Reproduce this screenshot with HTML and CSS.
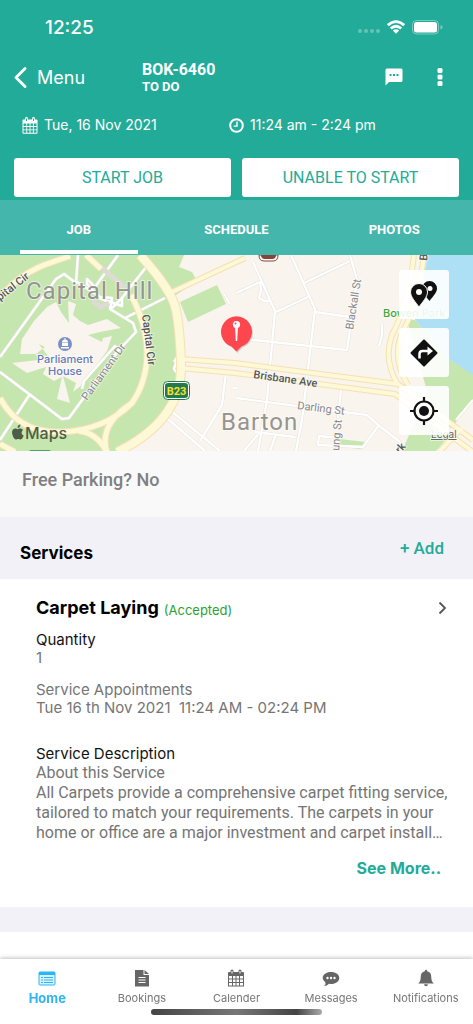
FILE: index.html
```html
<!DOCTYPE html>
<html lang="en">
<head>
  <meta charset="UTF-8" />
  <title>BOK-6460</title>
  <meta name="viewport" content="width=device-width, initial-scale=1.0" />
  <link rel="stylesheet" href="styles.css">
</head>
<body>

<header class="top">
  <div class="status">
    <span class="clock">12:25</span>
    <div class="status-icons">
      <svg width="22" height="18" viewBox="0 0 22 18" fill="#fff" opacity=".3"><circle cx="2" cy="13" r="2"/><circle cx="8" cy="13" r="2"/><circle cx="14" cy="13" r="2"/><circle cx="20" cy="13" r="2"/></svg>
      <svg width="18" height="14" viewBox="0 0 18 14" fill="none" stroke="#fff" stroke-width="2.8"><path d="M.8 5.2Q9-2 17.2 5.2M3.800 8.500Q9 4 14.200 8.500"/><path d="M5.800 10.600Q9 8 12.200 10.600L9 13.800z" fill="#fff" stroke="none"/></svg>
      <svg width="31" height="15" viewBox="0 0 31 15"><rect x=".5" y=".5" width="26" height="13.5" rx="4" fill="none" stroke="#fff" opacity=".4"/><rect x="2" y="2" width="23" height="10.5" rx="2.5" fill="#fff"/><path d="M28.5 5q2 .5 2 2.300T28.500 9.600z" fill="#fff" opacity=".4"/></svg>
    </div>
  </div>

  <div class="navbar">
    <a href="#" class="back">
      <svg width="13" height="21" viewBox="0 0 13 21" fill="none" stroke="#fff" stroke-width="2.800" stroke-linecap="round" stroke-linejoin="round"><path d="M11 1.600L2 10.500l9 8.900"/></svg>
      Menu
    </a>
    <div class="job-id">
      <h1>BOK-6460</h1>
      <p>TO DO</p>
    </div>
    <button class="icon-btn" aria-label="Chat">
      <svg width="18" height="18" viewBox="0 0 18 18"><path d="M2 .500h14q1.500 0 1.500 1.500v10.500q0 1.500-1.500 1.500H4l-3.500 3.500V2Q.500.500 2 .500z" fill="#fff"/><path d="M4.500 6h2v2h-2zM8 6h2v2H8zM11.500 6h2v2h-2z" fill="#22ab98"/></svg>
    </button>
    <button class="icon-btn more" aria-label="More">
      <svg width="6" height="18" viewBox="0 0 6 18" fill="#fff"><rect x=".500" width="5" height="5" rx="1.500"/><rect x=".500" y="6.500" width="5" height="5" rx="1.500"/><rect x=".500" y="13" width="5" height="5" rx="1.500"/></svg>
    </button>
  </div>

  <div class="when">
    <span class="date">
      <svg width="16" height="17" viewBox="0 0 16 17"><path d="M1.500 2.500h13q1 0 1 1V16q0 .800-1 .800h-13Q.500 16.800.500 16V3.500q0-1 1-1z" fill="#fff"/><path d="M1.500 6.500h2.800v2.500H1.500zM5.200 6.500H7.600v2.500H5.200zM8.500 6.500h2.400v2.500H8.500zM11.800 6.500h2.700v2.500h-2.700zM1.500 9.900h2.800v2.500H1.500zM5.200 9.900H7.600v2.500H5.200zM8.500 9.900h2.400v2.500H8.500zM11.800 9.900h2.700v2.500h-2.700zM1.500 13.300h2.800v2.500H1.500zM5.200 13.300H7.600v2.500H5.200zM8.500 13.300h2.400v2.500H8.500zM11.800 13.300h2.700v2.500h-2.700z" fill="#22ab98"/><path d="M4.500 1.200v3M11.500 1.200v3" stroke="#fff" stroke-width="2.600" stroke-linecap="round"/><path d="M4.500 1.500v2.500M11.500 1.500v2.500" stroke="#22ab98"/></svg>
      Tue, 16 Nov 2021
    </span>
    <span class="time">
      <svg width="15" height="15" viewBox="0 0 15 15" fill="none" stroke="#fff"><circle cx="7.500" cy="7.500" r="6.300" stroke-width="2"/><path d="M8 3.500v4.600H4.700" stroke-width="1.400"/></svg>
      11:24 am - 2:24 pm
    </span>
  </div>

  <div class="actions">
    <button>START JOB</button>
    <button>UNABLE TO START</button>
  </div>

  <nav class="tabs">
    <a href="#" class="active">JOB</a>
    <a href="#">SCHEDULE</a>
    <a href="#">PHOTOS</a>
  </nav>
</header>

<main>
  <section class="map">
    <svg class="map-art" viewBox="0 0 473 196" preserveAspectRatio="xMidYMid slice">
      <rect width="473" height="196" fill="#f9f4ed"/>
      <!-- parks and water -->
      <g fill="#c6e6b0">
        <path d="M0 0H140L172 40 181 80 181 130 170 155 120 196H0z"/>
        <path d="M140 0H184L179 12 192 17 197 26 176 40 165 30z"/>
        <path d="M180 47L217 30 226 49 188 67z"/>
        <path d="M407 65h8l34 39 24 15v28l-22 26-17-12z"/>
        <path d="M418 160l30 22-12 14h-34zM340 184l25 3-4 7-22-2z"/>
      </g>
      <path d="M428 0H473V120L449 104 415 65z" fill="#ade0f5"/>
      <path d="M20 99L22 84 34 66 47 52 56 47 61 57 69 68 68 46 76 49 73 60 80 66 88 70 107 64 121 73 100 77 88 80 102 87 103 83 112 81 107 96 82 130 73 137 76 128 63 121 66 132 70 148 57 144 62 122 54 126 43 119 46 112 27 118 12 108 38 105 36 99z" fill="#f9f4ed"/>
      <path d="M36 99L45 92 39 89 48 101z" fill="#c6e6b0"/>

      <!-- small streets -->
      <g fill="none" stroke="#e3dfd9" stroke-width="3.200" stroke-linejoin="round">
        <path d="M0 102L56 24 64 19 76 28 78 0M76 26L100 42 112 43 110 54 133 68 136 77 116 98 69 163 62 164 0 117M30 139L0 185M118 0L95 32 87 24 87 29 101 44 122 51 122 43M147 11L122 43 111 54M125 63L165 43M82 134L84 126 115 91 120 94 114 101M174 107L178 101 174 114 178 119M226 117L222 150 200 186M161 158L205 196M170 155L220 196M224 39L230 49M233 133L237 133"/>
        <path d="M253 7L275 56 267 145 258 196M291 0L315 54 314 63 302 165 296 196M236 38L260 27 261 35 259 43 264 46 270 46M304 28L350 6M276 57L310 41M350 0L357 25 347 95 235 83M315 57L350 62M382 70V80L379 91M236 143L367 160 377 169 400 187M341 134L338 163M379 170L363 192 318 190 319 181 340 183M255 177L295 182M276 179L270 196M260 177L244 196"/>
      </g>
      <g fill="none" stroke="#fff" stroke-width="2.400" stroke-linejoin="round">
        <path d="M0 102L56 24 64 19 76 28 78 0M76 26L100 42 112 43 110 54 133 68 136 77 116 98 69 163 62 164 0 117M30 139L0 185M118 0L95 32 87 24 87 29 101 44 122 51 122 43M147 11L122 43 111 54M125 63L165 43M82 134L84 126 115 91 120 94 114 101M174 107L178 101 174 114 178 119M226 117L222 150 200 186M161 158L205 196M170 155L220 196M224 39L230 49M233 133L237 133"/>
        <path d="M253 7L275 56 267 145 258 196M291 0L315 54 314 63 302 165 296 196M236 38L260 27 261 35 259 43 264 46 270 46M304 28L350 6M276 57L310 41M350 0L357 25 347 95 235 83M315 57L350 62M382 70V80L379 91M236 143L367 160 377 169 400 187M341 134L338 163M379 170L363 192 318 190 319 181 340 183M255 177L295 182M276 179L270 196M260 177L244 196M473 145L456 165"/>
      </g>
      <path d="M101 12L125 33M92 46L101 52 109 48" fill="none" stroke="#dedad4" stroke-width="5"/>

      <!-- main roads -->
      <g fill="none" stroke="#f6e0b4" stroke-linejoin="round">
        <path d="M140 0Q172 35 176 55T181 110Q182 165 117 197" stroke-width="10"/>
        <path d="M70 1L44 10Q15 22 0 44M86 0L101 14M131 40Q147 70 147 98T132 148Q105 175 62 177T0 143M79 176Q97 178 107 197M132 148Q98 170 107 197M0 189L15 197" stroke-width="7"/>
        <path d="M172 37L245 3M180 104L235 108 398 129 473 185M180 113L235 118 395 139 473 197M414 0Q408 50 392 80 383 105 398 130M424 0Q418 50 401 80 392 105 408 130M462 173L440 196" stroke-width="6"/>
      </g>
      <g fill="none" stroke="#fdf8d6" stroke-linejoin="round">
        <path d="M140 0Q172 35 176 55T181 110Q182 165 117 197" stroke-width="8"/>
        <path d="M70 1L44 10Q15 22 0 44M86 0L101 14M131 40Q147 70 147 98T132 148Q105 175 62 177T0 143M79 176Q97 178 107 197M132 148Q98 170 107 197M0 189L15 197" stroke-width="5"/>
        <path d="M172 37L245 3M180 104L235 108 398 129 473 185M180 113L235 118 395 139 473 197M414 0Q408 50 392 80 383 105 398 130M424 0Q418 50 401 80 392 105 408 130M462 173L440 196" stroke-width="4"/>
      </g>

      <!-- labels -->
      <g class="map-area">
        <text x="26" y="44">Capital Hill</text>
        <text x="221" y="175">Barton</text>
      </g>
      <g class="map-road">
        <text transform="translate(0 46) rotate(-38)">pital Cir</text>
        <text transform="translate(142 60) rotate(83)">Capital Cir</text>
        <text transform="translate(253 123) rotate(8)">Brisbane Ave</text>
        <text transform="translate(400 199) rotate(-48)">rk</text>
        <text transform="translate(427 6) rotate(-84)">B</text>
      </g>
      <g class="map-street">
        <text transform="translate(87 146) rotate(-54)">Parliament Dr</text>
        <text transform="translate(353 75) rotate(-81)">Blackall St</text>
        <text transform="translate(297 154) rotate(7)">Darling St</text>
        <text transform="translate(339 196) rotate(-85)">ung St</text>
      </g>
      <text x="383" y="62" class="map-park">Bowen Park</text>
      <g class="map-place">
        <text x="65" y="108">Parliament</text>
        <text x="65" y="120">House</text>
      </g>
      <circle cx="65" cy="89" r="7" fill="#7d90c4"/>
      <path d="M61 92h8v1.500h-8zM62 88h6v3h-6zM62 87.500q0-3 3-3t3 3zM64.500 83h1v2h-1z" fill="#fff"/>

      <!-- route shields -->
      <rect x="163.500" y="126.500" width="26" height="18" rx="4" fill="#fff" stroke="#237a50"/>
      <rect x="165" y="128" width="23" height="15" rx="3" fill="#237a50"/>
      <text x="176.500" y="140" class="map-shield">B23</text>
      <path d="M259 0h19q0 6-5 6h-9q-5 0-5-6z" fill="#fff" stroke="#864439"/><path d="M261 0h15q0 4-4 4h-7q-4 0-4-4z" fill="#864439"/>
      <rect x="29" y="195" width="22" height="4" rx="2" fill="#4f9d6c"/>

      <!-- maps logo -->
      <path d="M20.600 175.300c-.200-2 1.200-3 1.500-3.200-1-1.400-2.300-1.500-2.900-1.500-1.200 0-2 .700-2.600.7s-1.500-.7-2.400-.7c-2.400.1-3.700 2.400-2.900 5.700.5 2.100 2 5.200 3.600 5.200.9 0 1.300-.6 2.400-.6s1.400.6 2.300.6c1.400 0 2.500-2.100 3.100-3.900-.8-.3-2-1.100-2.100-2.300zM18.600 168.900c.5-.7.900-1.600.8-2.500-1.700.1-3.100 1.700-2.900 3.400.9 0 1.700-.3 2.100-.9z" transform="translate(1 3)" fill="#4d5c46"/>
      <text x="25" y="184" class="map-logo">Maps</text>
      <text x="431" y="183" class="map-legal">Legal</text>

      <!-- pin -->
      <path d="M236.500 97l-5-5.500a15.500 15.500 0 1 1 10 0z" fill="#000" opacity=".15" transform="translate(1 1)"/>
      <path d="M236.500 96.500l-5-5a15.500 15.500 0 1 1 10 0z" fill="#fe464e"/>
      <circle cx="236.500" cy="69.500" r="3.600" fill="#fff"/><path d="M235 71h3l-.800 15h-1.400z" fill="#fff"/><circle cx="235.500" cy="68.500" r="1" fill="#fe464e"/>
    </svg>
    <div class="map-buttons">
      <button aria-label="Show pins">
        <svg width="28" height="28" viewBox="0 0 28 28"><path d="M19.500 0a7.500 7.500 0 0 1 7.500 7.500c0 4-4 8-7.500 12.500-3.500-4.500-7.500-8.500-7.500-12.500A7.500 7.500 0 0 1 19.500 0z" fill="#111"/><circle cx="20" cy="7.500" r="2.500" fill="#fff"/><path d="M9 2.500a8.500 8.500 0 0 1 8.500 8.500c0 5-5 10-8.500 15C5.500 21 .500 16 .500 11A8.500 8.500 0 0 1 9 2.500z" fill="#111" stroke="#fff"/><circle cx="9" cy="11" r="3" fill="#fff"/></svg>
      </button>
      <button aria-label="Directions">
        <svg width="28" height="28" viewBox="0 0 28 28"><path d="M14 1.500L26.500 14 14 26.500 1.500 14z" fill="#111" stroke="#111" stroke-width="2" stroke-linejoin="round"/><path d="M9.500 19.500V15q0-3 3-3H18" fill="none" stroke="#fff" stroke-width="2.500"/><path d="M17.500 7.500L23 12l-5.500 4.500z" fill="#fff"/></svg>
      </button>
      <button aria-label="My location">
        <svg width="28" height="28" viewBox="0 0 28 28"><circle cx="14" cy="14" r="9.500" fill="none" stroke="#111" stroke-width="2.200"/><circle cx="14" cy="14" r="5" fill="#111"/><path d="M14 0v5M14 23v5M0 14h5M23 14h5" stroke="#111" stroke-width="2.200"/></svg>
      </button>
    </div>
  </section>

  <p class="parking">Free Parking? No</p>

  <div class="section-head">
    <h2>Services</h2>
    <button>+ Add</button>
  </div>

  <article class="service">
    <div class="service-title">
      <h3>Carpet Laying</h3>
      <span class="accepted">(Accepted)</span>
      <svg class="chevron" width="9" height="14" viewBox="0 0 9 14" fill="none" stroke="#555" stroke-width="1.800"><path d="M1.500 1.500L7 7l-5.500 5.500"/></svg>
    </div>
    <h4>Quantity</h4>
    <p>1</p>
    <div class="appointments">
      <p>Service Appointments</p>
      <p>Tue 16 th Nov 2021&nbsp; 11:24 AM - 02:24 PM</p>
    </div>
    <h4>Service Description</h4>
    <div class="description">
      <p>About this Service</p>
      <p>All Carpets provide a comprehensive carpet fitting service, tailored to match your requirements. The carpets in your home or office are a major investment and carpet install…</p>
    </div>
    <a href="#" class="see-more">See More..</a>
  </article>
</main>

<footer class="bottom">
  <nav>
    <a href="#" class="active">
      <svg width="18" height="18" viewBox="0 0 18 18"><rect x="1" y="3" width="16" height="13" rx="1" fill="#d8f1fd" stroke="#2db5f3"/><path d="M1 3h16v3H1z" fill="#2db5f3"/><path d="M3 8.500h2M3 11h2M3 13.500h2M6 8.500h9M6 11h9M6 13.500h9" stroke="#2db5f3"/></svg>
      Home
    </a>
    <a href="#">
      <svg width="18" height="18" viewBox="0 0 18 18"><path d="M2 1h8.500v5H16v11.500H2zM11.500 1L16 5h-4.500z" fill="#666"/><path d="M5.500 8.500h7M5.500 11h7M5.500 13.500h7" stroke="#fff"/></svg>
      Bookings
    </a>
    <a href="#">
      <svg width="18" height="18" viewBox="0 0 18 18"><path d="M2 3h14q1 0 1 1v13.500H1V4q0-1 1-1z" fill="#666"/><path d="M2 7h3v2.600H2zM6 7h2.500v2.600H6zM9.500 7H12v2.600H9.500zM13 7h3v2.600h-3zM2 10.500h3v2.500H2zM6 10.500h2.500v2.500H6zM9.500 10.500H12v2.500H9.500zM13 10.500h3v2.500h-3zM2 14h3v2.500H2zM6 14h2.500v2.500H6zM9.500 14H12v2.500H9.500zM13 14h3v2.500h-3z" fill="#fff"/><path d="M5 2v2.500M13 2v2.500" stroke="#666" stroke-width="3" stroke-linecap="round"/><path d="M5 2v2.500M13 2v2.500" stroke="#fff"/></svg>
      Calender
    </a>
    <a href="#">
      <svg width="18" height="18" viewBox="0 0 18 18"><path d="M9 3c4.700 0 8.300 2.600 8.300 6S13.700 15 9 15l-2-.200Q5 17 2 17q2-1.500 1.500-3.600Q.700 11.600.700 9C.700 5.600 4.300 3 9 3z" fill="#666"/><circle cx="5.500" cy="9" r="1.200" fill="#fff"/><circle cx="9" cy="9" r="1.200" fill="#fff"/><circle cx="12.500" cy="9" r="1.200" fill="#fff"/></svg>
      Messages
    </a>
    <a href="#">
      <svg width="18" height="18" viewBox="0 0 18 18"><path d="M9 .800q1.200 0 1.200 1.400 4 1 4 5.300 0 5 2.600 7H1.200q2.600-2 2.600-7 0-4.300 4-5.300Q7.800.800 9 .800zM7 15.300h4q-.300 2-2 2t-2-2z" fill="#666"/></svg>
      Notifications
    </a>
  </nav>
  <div class="home-bar"></div>
</footer>

</body>
</html>
```
FILE: styles.css
```css
:root {
  --teal: #22ab98;
  --teal-light: #45b6ab;
  --gray-bg: #f2f1f7;
  --text-muted: #757575;
  --blue: #2db5f3;
}

* {
  box-sizing: border-box;
}

body {
  margin: 0;
  min-height: 100vh;
  font-family: Inter, sans-serif;
  background: #fff;
  color: #000;
  padding-bottom: 66px;
}

h1, h2, h3, h4, p {
  margin: 0;
}

a {
  color: inherit;
  text-decoration: none;
}

button {
  border: none;
  padding: 0;
  background: none;
  font-family: Roboto, sans-serif;
  cursor: pointer;
}

svg {
  display: block;
  flex: none;
}

/* header */
.top {
  background: var(--teal);
  color: #fff;
}

.status {
  display: flex;
  justify-content: space-between;
  align-items: center;
  height: 54px;
  padding: 0 30px 0 45px;
}

.clock {
  font-size: 19px;
  font-weight: 500;
}

.status-icons {
  display: flex;
  align-items: center;
  gap: 7px;
}

.navbar {
  display: grid;
  grid-template-columns: 128px 1fr 18px 40px;
  align-items: center;
  height: 46px;
  padding: 0 30px 0 14px;
}

.icon-btn.more {
  justify-self: end;
}

.back {
  display: flex;
  align-items: center;
  gap: 10px;
  font-size: 18px;
}

.job-id {
  font-family: Roboto, sans-serif;
  font-weight: 700;
}

.job-id h1 {
  font-size: 16px;
  line-height: 18px;
}

.job-id p {
  font-size: 13px;
  line-height: 15px;
}

.when {
  display: grid;
  grid-template-columns: 207px 1fr;
  padding: 14px 22px 22px;
  font-size: 14px;
  line-height: 22px;
}

.date, .time {
  display: flex;
  align-items: center;
  gap: 6px;
}

.actions {
  display: flex;
  gap: 11px;
  padding: 0 14px 3px;
}

.actions button {
  flex: 1;
  height: 39px;
  border-radius: 3px;
  background: #fff;
  color: var(--teal);
  font-size: 16px;
}

.tabs {
  display: flex;
  height: 55px;
  background: var(--teal-light);
  font-family: Roboto, sans-serif;
  font-size: 13px;
  font-weight: 700;
}

.tabs a {
  flex: 1;
  display: flex;
  flex-direction: column;
  align-items: center;
  padding-top: 20px;
  line-height: 20px;
}

.tabs a.active::after {
  content: "";
  width: 75%;
  height: 4px;
  margin-top: 10px;
  background: #fff;
}

/* map */
.map {
  position: relative;
  height: 196px;
}

.map-art {
  width: 100%;
  height: 100%;
}

.map text {
  font-family: Inter, sans-serif;
  paint-order: stroke;
  stroke: #ffffff88;
  stroke-width: 2px;
  stroke-linejoin: round;
}

.map-area text {
  font-family: Roboto, sans-serif;
  font-size: 24px;
  letter-spacing: 1px;
  fill: #96948e;
}

.map-road text {
  font-family: Roboto, sans-serif;
  font-size: 11px;
  font-weight: 500;
  fill: #555;
}

.map-street text {
  font-family: Roboto, sans-serif;
  font-size: 11px;
  fill: #888;
}

.map text.map-park {
  font-size: 11px;
  font-weight: 500;
  fill: #3ba936;
}

.map-place text {
  font-size: 11px;
  font-weight: 500;
  fill: #6379b8;
  text-anchor: middle;
}

.map text.map-shield {
  font-family: Roboto, sans-serif;
  font-size: 11px;
  font-weight: 700;
  fill: #fbe02c;
  stroke: none;
  text-anchor: middle;
}

.map text.map-logo {
  font-size: 16px;
  font-weight: 500;
  fill: #4d5c46;
  stroke: none;
}

.map text.map-legal {
  font-size: 10px;
  fill: #666;
  text-decoration: underline;
}

.map-buttons {
  position: absolute;
  top: 15px;
  right: 24px;
  display: grid;
  gap: 9px;
}

.map-buttons button {
  display: grid;
  place-items: center;
  width: 50px;
  height: 49px;
  border-radius: 3px;
  background: #ffffffe6;
}

.parking {
  padding: 18px 22px 26px;
  background: #f9f9f9;
  color: #808080;
  font-family: Roboto, sans-serif;
  font-size: 18px;
  font-weight: 500;
  line-height: 22px;
}

/* services */
.section-head {
  display: flex;
  justify-content: space-between;
  padding: 20px 29px 14px 20px;
  background: var(--gray-bg);
}

.section-head h2 {
  padding-top: 4px;
  font-size: 17px;
  line-height: 24px;
  font-weight: 700;
}

.section-head button {
  height: 22px;
  color: var(--teal);
  font-size: 17px;
  font-weight: 500;
}

.service {
  padding: 17px 26px 29px 36px;
  border-bottom: 25px solid var(--gray-bg);
  color: var(--text-muted);
  font-size: 15px;
  line-height: 18px;
}

.service-title {
  display: flex;
  align-items: center;
  gap: 5px;
  margin-bottom: 11px;
}

.service-title h3 {
  color: #000;
  font-size: 18px;
  line-height: 24px;
  font-weight: 700;
}

.accepted {
  padding-top: 3px;
  color: #2ba12f;
  font-size: 13px;
}

.chevron {
  margin-left: auto;
}

.service h4 {
  color: #111;
  font-size: 15px;
  font-weight: 400;
}

.appointments {
  margin: 14px 0 28px;
}

.description {
  margin-right: -6px;
  font-family: Roboto, sans-serif;
  font-size: 16px;
  line-height: 20px;
}

.see-more {
  display: block;
  margin: 15px 6px 0 0;
  color: var(--teal);
  font-size: 16px;
  line-height: 20px;
  font-weight: 700;
  text-align: right;
}

/* bottom navigation */
.bottom {
  position: fixed;
  bottom: 0;
  left: 0;
  right: 0;
  padding: 10px 0 9px;
  background: #fff;
  box-shadow: 0 -1px 4px #00000040;
}

.bottom nav {
  display: grid;
  grid-template-columns: repeat(5, 1fr);
}

.bottom a {
  display: flex;
  flex-direction: column;
  align-items: center;
  gap: 3px;
  color: #757575;
  font-size: 11px;
  line-height: 16px;
}

.bottom a.active {
  color: var(--blue);
  font-size: 13px;
  font-weight: 700;
}

.home-bar {
  width: 36%;
  height: 6px;
  margin: 3px auto 0;
  border-radius: 3px;
  background: linear-gradient(90deg, #444, #777 50%, #444 85%, #aaa);
}
```
